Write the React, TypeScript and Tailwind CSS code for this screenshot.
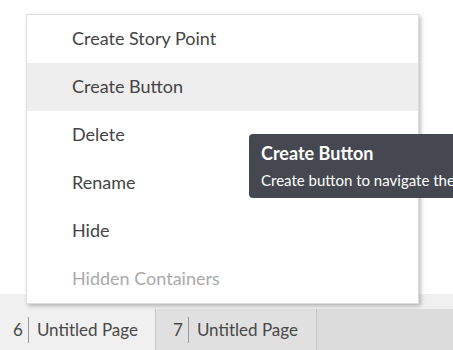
import React from 'react';

const items = [
    { label: 'Create Story Point' },
    { label: 'Create Button', active: true },
    { label: 'Delete' },
    { label: 'Rename' },
    { label: 'Hide' },
    { label: 'Hidden Containers', disabled: true },
];

const tabs = [
    { num: 6, name: 'Untitled Page', active: true },
    { num: 7, name: 'Untitled Page' },
];

export default function App() {
    return (
        <div className="relative w-[453px] h-[350px] overflow-hidden flex flex-col bg-white" style={{ fontFamily: 'Lato, "Noto Sans", sans-serif' }}>
            {/* Canvas */}
            <div className="flex-1 bg-white" />
            <div className="h-[15px] bg-[#f0f0f0]" />

            {/* Page tabs */}
            <div className="h-[41px] flex bg-[#dcdcdc] text-[17px] text-[#484848]">
                {tabs.map(t => (
                    <div
                        key={t.num}
                        className={`flex items-center border-r border-[#c4c4c4] ${t.active ? 'bg-[#f0f0f0] w-[156px] pl-[13px]' : 'bg-[#e0e0e0] w-[161px] pl-[17px]'}`}
                    >
                        <span>{t.num}</span>
                        <span className="ml-[5px] mr-[8px] h-[26px] w-px bg-[#999]" />
                        <span>{t.name}</span>
                    </div>
                ))}
            </div>

            {/* Context menu */}
            <div className="absolute left-[26px] top-[14px] w-[393px] bg-white border border-[#dedede] shadow-[2px_2px_4px_rgba(0,0,0,0.25)]">
                {items.map(i => (
                    <div
                        key={i.label}
                        className={`h-[48px] flex items-center pl-[45px] pb-[1px] text-[18px] ${i.active ? 'bg-[#eeeeee]' : ''} ${i.disabled ? 'text-[#aaaaaa]' : 'text-[#444444]'}`}
                    >
                        {i.label}
                    </div>
                ))}
            </div>

            {/* Tooltip */}
            <div className="absolute left-[249px] top-[134px] h-[64px] w-[260px] rounded-[4px] bg-[#454850] text-white pl-[12px] pt-[7px]">
                <div className="text-[18px] font-bold leading-[24px]">Create Button</div>
                <div className="text-[15px] leading-[20px] mt-[5px] whitespace-nowrap">Create button to navigate the story</div>
            </div>
        </div>
    );
}
